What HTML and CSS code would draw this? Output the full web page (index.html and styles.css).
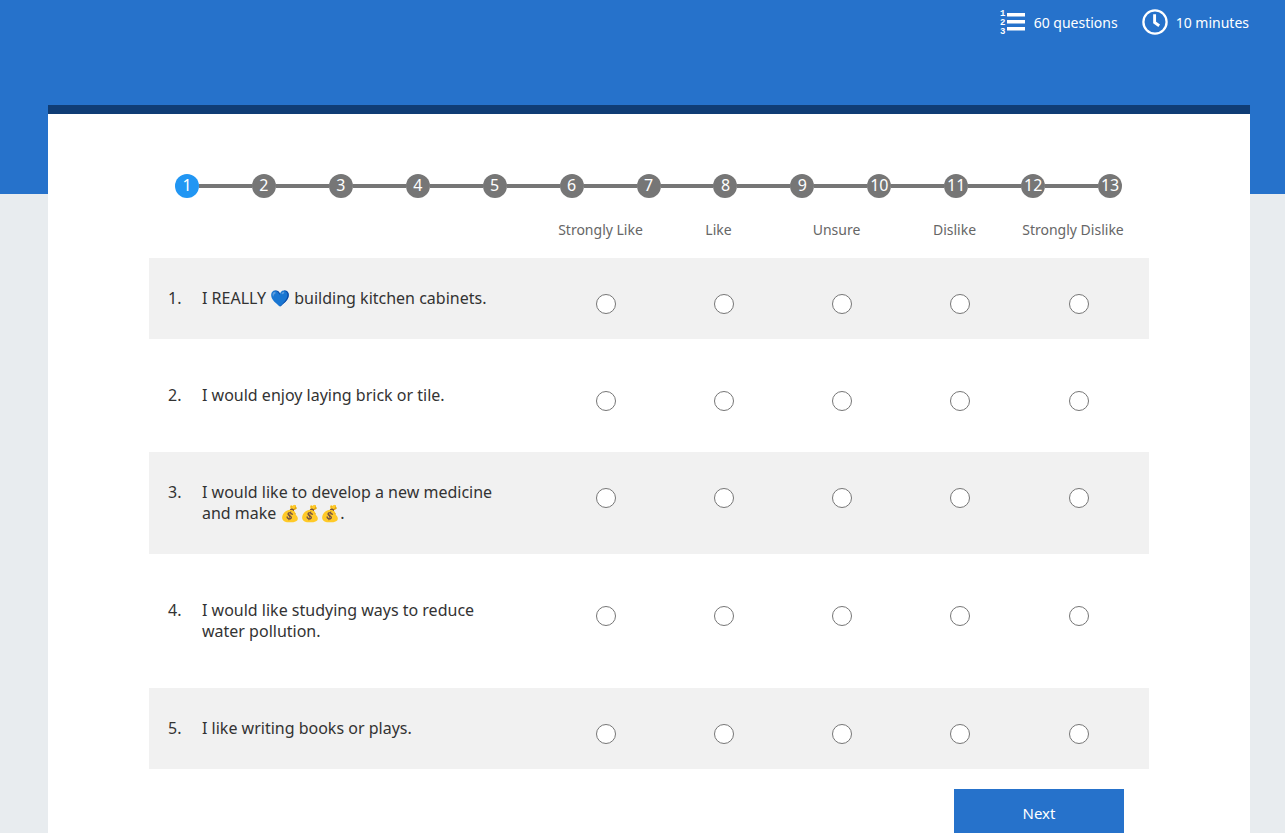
FILE: index.html
```html
<!DOCTYPE html>
<html lang="en">
<head>
<meta charset="utf-8">
<meta name="viewport" content="width=device-width, initial-scale=1">
<title>Interest survey</title>
<link rel="stylesheet" href="styles.css">
</head>
<body>
<header class="banner">
  <div class="stat">
    <svg class="stat-icon" viewBox="0 0 26 26" aria-hidden="true">
      <g class="list-digits"><text x="0" y="7">1</text><text x="0" y="16">2</text><text x="0" y="25">3</text></g>
      <path d="M7 4h18v3.400H7zM7 11h18v3.400H7zM7 18h18v3.400H7z" fill="#fff"/>
    </svg>
    <span>60 questions</span>
  </div>
  <div class="stat">
    <svg class="stat-icon" viewBox="0 0 26 26" fill="none" stroke="#fff" aria-hidden="true">
      <circle cx="13" cy="13" r="11.600" stroke-width="2.300"/>
      <path d="M12.600 5.200v8.300l4.600 3.300" stroke-width="2.900"/>
    </svg>
    <span>10 minutes</span>
  </div>
</header>
<main class="card">
  <form class="survey">
    <ol class="steps">
      <li class="step"><span class="dot current" aria-current="step">1</span></li>
      <li class="step"><span class="dot">2</span></li>
      <li class="step"><span class="dot">3</span></li>
      <li class="step"><span class="dot">4</span></li>
      <li class="step"><span class="dot">5</span></li>
      <li class="step"><span class="dot">6</span></li>
      <li class="step"><span class="dot">7</span></li>
      <li class="step"><span class="dot">8</span></li>
      <li class="step"><span class="dot">9</span></li>
      <li class="step"><span class="dot">10</span></li>
      <li class="step"><span class="dot">11</span></li>
      <li class="step"><span class="dot">12</span></li>
      <li class="step"><span class="dot">13</span></li>
    </ol>
    <table class="questions">
      <colgroup><col class="col-number"><col><col class="col-choice"><col class="col-choice"><col class="col-choice"><col class="col-choice"><col class="col-last"></colgroup>
      <thead>
        <tr><td></td><td></td><th scope="col" id="c1">Strongly Like</th><th scope="col" id="c2">Like</th><th scope="col" id="c3">Unsure</th><th scope="col" id="c4">Dislike</th><th scope="col" id="c5">Strongly Dislike</th></tr>
      </thead>
      <tbody>
        <tr>
          <td class="number">1.</td><th scope="row" class="question" id="q1">I REALLY 💙 building kitchen cabinets.</th>
          <td class="choice"><input type="radio" name="q1" aria-labelledby="q1 c1"></td>
          <td class="choice"><input type="radio" name="q1" aria-labelledby="q1 c2"></td>
          <td class="choice"><input type="radio" name="q1" aria-labelledby="q1 c3"></td>
          <td class="choice"><input type="radio" name="q1" aria-labelledby="q1 c4"></td>
          <td class="choice"><input type="radio" name="q1" aria-labelledby="q1 c5"></td>
        </tr>
        <tr>
          <td class="number">2.</td><th scope="row" class="question" id="q2">I would enjoy laying brick or tile.</th>
          <td class="choice"><input type="radio" name="q2" aria-labelledby="q2 c1"></td>
          <td class="choice"><input type="radio" name="q2" aria-labelledby="q2 c2"></td>
          <td class="choice"><input type="radio" name="q2" aria-labelledby="q2 c3"></td>
          <td class="choice"><input type="radio" name="q2" aria-labelledby="q2 c4"></td>
          <td class="choice"><input type="radio" name="q2" aria-labelledby="q2 c5"></td>
        </tr>
        <tr>
          <td class="number">3.</td><th scope="row" class="question" id="q3">I would like to develop a new medicine and make 💰💰💰.</th>
          <td class="choice"><input type="radio" name="q3" aria-labelledby="q3 c1"></td>
          <td class="choice"><input type="radio" name="q3" aria-labelledby="q3 c2"></td>
          <td class="choice"><input type="radio" name="q3" aria-labelledby="q3 c3"></td>
          <td class="choice"><input type="radio" name="q3" aria-labelledby="q3 c4"></td>
          <td class="choice"><input type="radio" name="q3" aria-labelledby="q3 c5"></td>
        </tr>
        <tr>
          <td class="number">4.</td><th scope="row" class="question" id="q4">I would like studying ways to reduce water pollution.</th>
          <td class="choice"><input type="radio" name="q4" aria-labelledby="q4 c1"></td>
          <td class="choice"><input type="radio" name="q4" aria-labelledby="q4 c2"></td>
          <td class="choice"><input type="radio" name="q4" aria-labelledby="q4 c3"></td>
          <td class="choice"><input type="radio" name="q4" aria-labelledby="q4 c4"></td>
          <td class="choice"><input type="radio" name="q4" aria-labelledby="q4 c5"></td>
        </tr>
        <tr>
          <td class="number">5.</td><th scope="row" class="question" id="q5">I like writing books or plays.</th>
          <td class="choice"><input type="radio" name="q5" aria-labelledby="q5 c1"></td>
          <td class="choice"><input type="radio" name="q5" aria-labelledby="q5 c2"></td>
          <td class="choice"><input type="radio" name="q5" aria-labelledby="q5 c3"></td>
          <td class="choice"><input type="radio" name="q5" aria-labelledby="q5 c4"></td>
          <td class="choice"><input type="radio" name="q5" aria-labelledby="q5 c5"></td>
        </tr>
      </tbody>
    </table>
    <div class="actions"><button type="button" class="next">Next</button></div>
  </form>
</main>
</body>
</html>
```

FILE: styles.css
```css
* { box-sizing: border-box; }
body {
  margin: 0;
  background: #e8ecef;
  color: #333;
  font: 16px/21px "Noto Sans", "Noto Color Emoji", sans-serif;
}
.banner {
  display: flex;
  justify-content: flex-end;
  align-items: flex-start;
  gap: 24px;
  min-height: 194px;
  padding: 9px 36px 0 48px;
  background: #2672cb;
  color: #fff;
  font-size: 14px;
}
.stat { display: flex; align-items: center; gap: 8px; }
.stat-icon { width: 26px; height: 26px; overflow: visible; }
.list-digits { fill: #fff; font: bold 9px "Liberation Mono", monospace; }
.card {
  margin: -89px 35px 0 48px;
  padding: 60px 24px 48px;
  border-top: 9px solid #103d75;
  background: #fff;
}
.survey { max-width: 1000px; margin: 0 auto; }
.steps {
  display: flex;
  margin: 0;
  padding: 0 27px 0 26px;
  list-style: none;
}
.step { display: flex; align-items: center; }
.step:not(:last-child) { flex: 1; }
.step:not(:last-child)::after {
  content: "";
  flex: 1;
  height: 4px;
  background: #767676;
}
.dot {
  display: flex;
  justify-content: center;
  width: 24px;
  height: 24px;
  border-radius: 50%;
  background: #767676;
  color: #fff;
  line-height: 22px;
}
.current { background: #2196f3; }
.questions {
  width: 100%;
  table-layout: fixed;
  border-spacing: 0 16px;
}
.questions td, .questions th { padding: 0; font-weight: 400; vertical-align: top; }
.col-number { width: 53px; }
.col-choice { width: 118px; }
.col-last { width: 136px; }
.questions thead th { padding: 5px 0 2px 1px; color: #666; font-size: 14px; text-align: center; }
.questions th:last-child, .questions .choice:last-child { padding-right: 17px; }
.questions tbody tr:nth-child(odd) { background: #f1f1f1; }
.questions .number { padding: 30px 0 30px 19px; }
.questions .question { padding: 30px 24px 30px 0; text-align: left; }
.questions .choice { padding-top: 36px; padding-left: 12px; }
.choice input {
  appearance: none;
  display: block;
  width: 20px;
  height: 20px;
  margin: 0 auto;
  border: 1px solid #767676;
  border-radius: 50%;
  background: #fff;
}
.choice input:checked { border: 6px solid #2672cb; }
.actions { display: flex; justify-content: flex-end; padding: 4px 25px 0; }
.next {
  min-width: 170px;
  padding: 14px 24px;
  border: 0;
  background: #2672cb;
  color: #fff;
  font: 15px/21px "Noto Sans", sans-serif;
}
```
